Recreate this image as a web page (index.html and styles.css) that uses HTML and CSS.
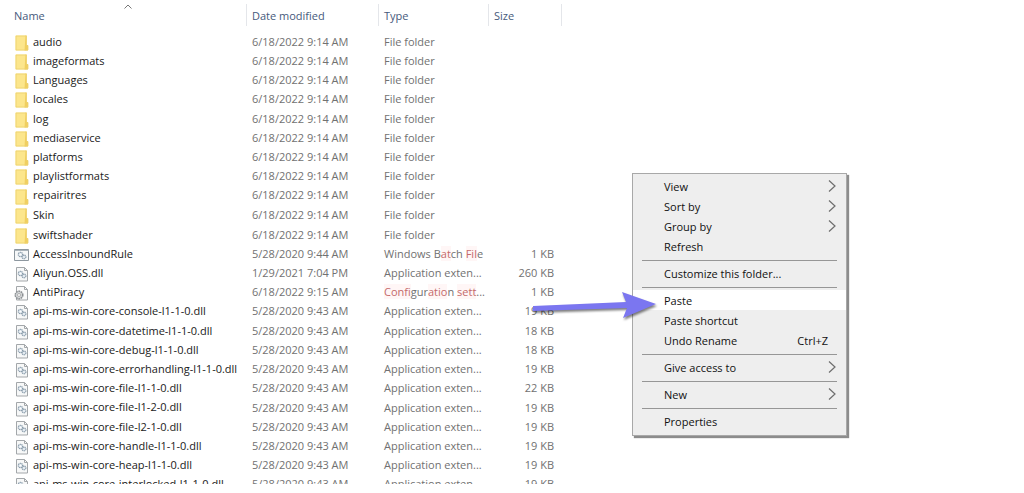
FILE: index.html
```
<!DOCTYPE html>
<html lang="en">
<head>
<meta charset="utf-8">
<title>File list</title>
<link rel="stylesheet" href="styles.css">
</head>
<body>
<svg class="symbols" aria-hidden="true">
  <symbol id="folder" viewBox="0 0 16 16">
    <path d="M1.500 .5h11v15h-11z" fill="#fce68c"/>
    <path d="M11.500 .5h1v9.500H14v5.500h-3.500z" fill="#f0cf60"/>
    <path d="M2 1h10.500v9.500H14V15H2z" fill="none" stroke="#ecd06e" stroke-width=".8"/>
  </symbol>
  <symbol id="gears" viewBox="0 0 10 9">
    <circle cx="3.500" cy="3.500" r="2.200" fill="#e4ebf1" stroke="#8a9cab" stroke-width="1.300" stroke-dasharray="1.200 .5"/>
    <circle cx="3.500" cy="3.500" r=".8" fill="#fff"/>
    <circle cx="7" cy="6" r="1.900" fill="#e4ebf1" stroke="#8a9cab" stroke-width="1.200" stroke-dasharray="1.200 .5"/>
  </symbol>
  <symbol id="dll" viewBox="0 0 16 16">
    <path d="M2.500 1.500h8l3 3v10.500h-11z" fill="#f7f8f8" stroke="#a3a7aa"/>
    <path d="M10.500 1.500v3h3" fill="none" stroke="#a3a7aa"/>
    <use href="#gears" x="3" y="4" width="10" height="9"/>
  </symbol>
  <symbol id="batch" viewBox="0 0 16 16">
    <path d="M.5 2.500h14v11H.5z" fill="#f6f8f9" stroke="#8d979f"/>
    <path d="M.5 3.500h14" stroke="#a9b3ba"/>
    <use href="#gears" x="3" y="4" width="10" height="9"/>
  </symbol>
  <symbol id="config" viewBox="0 0 16 16">
    <path d="M2.500 1.500h8l3 3v10.500h-11z" fill="#fafafa" stroke="#a3a7aa"/>
    <path d="M10.500 1.500v3h3" fill="none" stroke="#a3a7aa"/>
    <circle cx="5" cy="10" r="3.800" fill="#d3d6d8" stroke="#8b8f92" stroke-width="1.500" stroke-dasharray="1.700 .7"/>
    <circle cx="5" cy="10" r="1.500" fill="#fff" stroke="#999" stroke-width=".7"/>
  </symbol>
  <symbol id="chevron" viewBox="0 0 8 12">
    <path d="M1 .5 7 6 1 11.500" fill="none" stroke="#6e6e6e" stroke-width="1.200"/>
  </symbol>
</svg>

<main class="explorer">
  <table class="files">
    <colgroup><col class="col-name"><col class="col-date"><col class="col-type"><col class="col-size"></colgroup>
    <thead>
      <tr>
        <th scope="col" aria-sort="ascending">Name<svg class="sort" viewBox="0 0 8 5" aria-hidden="true"><path d="M.5 4.500 4 1l3.500 3.500" fill="none" stroke="#777"/></svg></th>
        <th scope="col">Date modified</th><th scope="col">Type</th><th scope="col">Size</th>
      </tr>
    </thead>
    <tbody>
      <tr><td><svg class="icon"><use href="#folder"/></svg>audio</td><td>6/18/2022 9:14 AM</td><td>File folder</td><td></td></tr>
      <tr><td><svg class="icon"><use href="#folder"/></svg>imageformats</td><td>6/18/2022 9:14 AM</td><td>File folder</td><td></td></tr>
      <tr><td><svg class="icon"><use href="#folder"/></svg>Languages</td><td>6/18/2022 9:14 AM</td><td>File folder</td><td></td></tr>
      <tr><td><svg class="icon"><use href="#folder"/></svg>locales</td><td>6/18/2022 9:14 AM</td><td>File folder</td><td></td></tr>
      <tr><td><svg class="icon"><use href="#folder"/></svg>log</td><td>6/18/2022 9:14 AM</td><td>File folder</td><td></td></tr>
      <tr><td><svg class="icon"><use href="#folder"/></svg>mediaservice</td><td>6/18/2022 9:14 AM</td><td>File folder</td><td></td></tr>
      <tr><td><svg class="icon"><use href="#folder"/></svg>platforms</td><td>6/18/2022 9:14 AM</td><td>File folder</td><td></td></tr>
      <tr><td><svg class="icon"><use href="#folder"/></svg>playlistformats</td><td>6/18/2022 9:14 AM</td><td>File folder</td><td></td></tr>
      <tr><td><svg class="icon"><use href="#folder"/></svg>repairitres</td><td>6/18/2022 9:14 AM</td><td>File folder</td><td></td></tr>
      <tr><td><svg class="icon"><use href="#folder"/></svg>Skin</td><td>6/18/2022 9:14 AM</td><td>File folder</td><td></td></tr>
      <tr><td><svg class="icon"><use href="#folder"/></svg>swiftshader</td><td>6/18/2022 9:14 AM</td><td>File folder</td><td></td></tr>
      <tr><td><svg class="icon"><use href="#batch"/></svg>AccessInboundRule</td><td>5/28/2020 9:44 AM</td><td>Windows B<span class="tint">at</span>ch <span class="tint">Fil</span>e</td><td>1 KB</td></tr>
      <tr><td><svg class="icon"><use href="#dll"/></svg>Aliyun.OSS.dll</td><td>1/29/2021 7:04 PM</td><td>Application exten...</td><td>260 KB</td></tr>
      <tr><td><svg class="icon"><use href="#config"/></svg>AntiPiracy</td><td>6/18/2022 9:15 AM</td><td><span class="tint">Conf</span>igur<span class="tint">atio</span>n <span class="tint">sett</span>...</td><td>1 KB</td></tr>
      <tr><td><svg class="icon"><use href="#dll"/></svg>api-ms-win-core-console-l1-1-0.dll</td><td>5/28/2020 9:43 AM</td><td>Application exten...</td><td>19 KB</td></tr>
      <tr><td><svg class="icon"><use href="#dll"/></svg>api-ms-win-core-datetime-l1-1-0.dll</td><td>5/28/2020 9:43 AM</td><td>Application exten...</td><td>18 KB</td></tr>
      <tr><td><svg class="icon"><use href="#dll"/></svg>api-ms-win-core-debug-l1-1-0.dll</td><td>5/28/2020 9:43 AM</td><td>Application exten...</td><td>18 KB</td></tr>
      <tr><td><svg class="icon"><use href="#dll"/></svg>api-ms-win-core-errorhandling-l1-1-0.dll</td><td>5/28/2020 9:43 AM</td><td>Application exten...</td><td>19 KB</td></tr>
      <tr><td><svg class="icon"><use href="#dll"/></svg>api-ms-win-core-file-l1-1-0.dll</td><td>5/28/2020 9:43 AM</td><td>Application exten...</td><td>22 KB</td></tr>
      <tr><td><svg class="icon"><use href="#dll"/></svg>api-ms-win-core-file-l1-2-0.dll</td><td>5/28/2020 9:43 AM</td><td>Application exten...</td><td>19 KB</td></tr>
      <tr><td><svg class="icon"><use href="#dll"/></svg>api-ms-win-core-file-l2-1-0.dll</td><td>5/28/2020 9:43 AM</td><td>Application exten...</td><td>19 KB</td></tr>
      <tr><td><svg class="icon"><use href="#dll"/></svg>api-ms-win-core-handle-l1-1-0.dll</td><td>5/28/2020 9:43 AM</td><td>Application exten...</td><td>19 KB</td></tr>
      <tr><td><svg class="icon"><use href="#dll"/></svg>api-ms-win-core-heap-l1-1-0.dll</td><td>5/28/2020 9:43 AM</td><td>Application exten...</td><td>19 KB</td></tr>
      <tr><td><svg class="icon"><use href="#dll"/></svg>api-ms-win-core-interlocked-l1-1-0.dll</td><td>5/28/2020 9:43 AM</td><td>Application exten...</td><td>19 KB</td></tr>
    </tbody>
  </table>
</main>

<div class="menu" role="menu">
  <button class="item" role="menuitem">View<svg class="more"><use href="#chevron"/></svg></button>
  <button class="item" role="menuitem">Sort by<svg class="more"><use href="#chevron"/></svg></button>
  <button class="item" role="menuitem">Group by<svg class="more"><use href="#chevron"/></svg></button>
  <button class="item" role="menuitem">Refresh</button>
  <hr>
  <button class="item" role="menuitem">Customize this folder...</button>
  <hr>
  <button class="item active" role="menuitem">Paste</button>
  <button class="item" role="menuitem">Paste shortcut</button>
  <button class="item" role="menuitem">Undo Rename<span class="keys">Ctrl+Z</span></button>
  <hr>
  <button class="item" role="menuitem">Give access to<svg class="more"><use href="#chevron"/></svg></button>
  <hr>
  <button class="item" role="menuitem">New<svg class="more"><use href="#chevron"/></svg></button>
  <hr>
  <button class="item" role="menuitem">Properties</button>
</div>

<svg class="pointer" viewBox="0 0 124 28" aria-hidden="true">
  <path d="M0 14 93 10 89 0l34 12-33 14 4-10L0 19z" fill="#7b76f0"/>
</svg>
</body>
</html>
```

FILE: styles.css
```
body {
  margin: 0;
  background: #fff;
  color: #222;
  font: 11px/19px "Open Sans", "Noto Sans", sans-serif;
}

.symbols {
  position: absolute;
  width: 0;
  height: 0;
}

.explorer {
  box-sizing: border-box;
  height: 484px;
  padding-top: 4px;
  overflow: hidden;
}

.files {
  width: 562px;
  table-layout: fixed;
  border-collapse: separate;
  border-spacing: 0;
  white-space: nowrap;
}

.col-name { width: 247px; }
.col-date { width: 132px; }
.col-type { width: 110px; }
.col-size { width: 73px; }

.files th {
  position: relative;
  height: 22px;
  padding: 0 5px;
  border-right: 1px solid #e4e6ea;
  color: #465a7c;
  font-weight: 400;
  text-align: left;
}

.files th:first-child { padding-left: 14px; }

.sort {
  position: absolute;
  top: 0;
  left: 124px;
  width: 8px;
  height: 5px;
}

.files tbody::before {
  content: "";
  display: block;
  height: 6px;
}

.files td {
  height: 19px;
  padding: 0 5px;
  color: #717171;
}

.files tr:nth-child(5n) td { height: 20px; }

.files td:first-child {
  padding-left: 14px;
  color: #1a1a1a;
}

.files td:last-child {
  padding-right: 8px;
  text-align: right;
}

.icon {
  width: 16px;
  height: 16px;
  margin-right: 3px;
  vertical-align: middle;
}

.tint {
  background: #fff6f6;
  color: #c46a6a;
}

.menu {
  position: absolute;
  top: 173px;
  left: 632px;
  box-sizing: border-box;
  width: 215px;
  padding: 2px 0 4px;
  border: 1px solid #a8a8a8;
  background: #eee;
  box-shadow: 2px 2px 1px #8c8c8c;
}

.item {
  display: flex;
  align-items: center;
  justify-content: space-between;
  width: 100%;
  height: 20px;
  padding: 0 10px 0 31px;
  border: 0;
  background: none;
  color: #111;
  font: inherit;
  text-align: left;
}

.item.active { background: #fff; }

.more {
  width: 8px;
  height: 12px;
}

.keys { margin-right: 8px; }

.menu hr {
  height: 1px;
  margin: 4px 9px 2px;
  border: 0;
  background: #969696;
}

.pointer {
  position: absolute;
  top: 292px;
  left: 533px;
  width: 124px;
  height: 28px;
  overflow: visible;
  filter: drop-shadow(1px 2px 1px rgba(0, 0, 0, .5));
}
```
